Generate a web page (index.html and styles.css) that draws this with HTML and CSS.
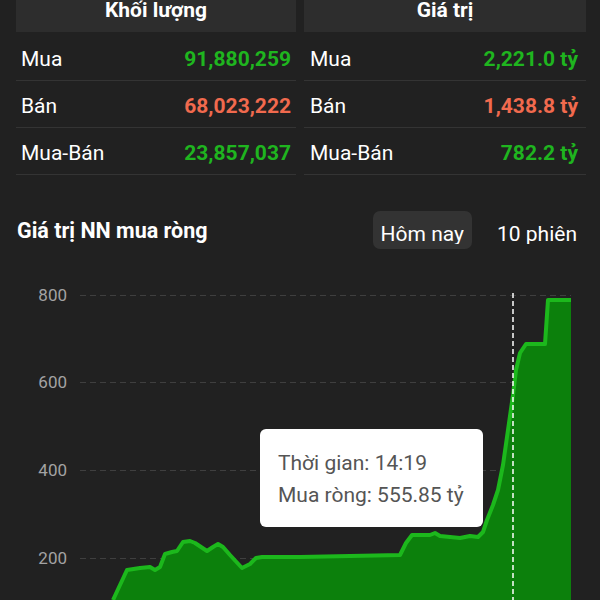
FILE: index.html
```html
<!DOCTYPE html>
<html lang="vi">
<head>
    <meta charset="UTF-8">
    <meta name="viewport" content="width=device-width, initial-scale=1.0">
    <title>Giao dịch nhà đầu tư nước ngoài</title>
    <link rel="stylesheet" href="styles.css">
</head>
<body>
    <div class="stats">
        <div class="panel">
            <div class="panel-head">Khối lượng</div>
            <div class="row first"><span>Mua</span><span class="num up">91,880,259</span></div>
            <div class="row"><span>Bán</span><span class="num down">68,023,222</span></div>
            <div class="row"><span>Mua-Bán</span><span class="num up">23,857,037</span></div>
        </div>
        <div class="panel right">
            <div class="panel-head">Giá trị</div>
            <div class="row first"><span>Mua</span><span class="num up">2,221.0 tỷ</span></div>
            <div class="row"><span>Bán</span><span class="num down">1,438.8 tỷ</span></div>
            <div class="row"><span>Mua-Bán</span><span class="num up">782.2 tỷ</span></div>
        </div>
    </div>

    <div class="chart-head">
        <h3 class="chart-title">Giá trị NN mua ròng</h3>
        <div class="tabs">
            <div class="tab active"><span class="tab-label">Hôm nay</span></div>
            <div class="tab"><span class="tab-label">10 phiên</span></div>
        </div>
    </div>

    <div class="chart">
        <svg class="chart-svg" width="600" height="345" viewBox="0 255 600 345" xmlns="http://www.w3.org/2000/svg">
            <g class="axis">
                <text x="67" y="301" text-anchor="end">800</text>
                <text x="67" y="388" text-anchor="end">600</text>
                <text x="67" y="476" text-anchor="end">400</text>
                <text x="67" y="564" text-anchor="end">200</text>
            </g>
            <g stroke="#3f3f3f" stroke-width="1" stroke-dasharray="6 4">
                <line x1="80" y1="295.5" x2="571" y2="295.5"/>
                <line x1="80" y1="382.5" x2="571" y2="382.5"/>
                <line x1="80" y1="470.5" x2="571" y2="470.5"/>
                <line x1="80" y1="558.5" x2="571" y2="558.5"/>
            </g>
            <!-- area + line, page coords -->
            <path fill="#0c800c" d="M113,600 L120,585 L127,570 L140,568 L150,567 L155,570 L160,567 L165,554 L172,552 L177,551 L183,542 L190,541 L195,543 L207,551 L213,547 L218,544 L223,547 L230,555 L242,568 L250,564 L256,558 L262,557 L300,557 L400,555 L406,543 L412,535 L430,535 L435,533 L440,536 L450,537 L460,538 L470,536 L478,537 L483,532 L487,520 L493,505 L498,490 L503,465 L508,430 L513,395 L516,370 L520,353 L526,344 L545,344 L548,300 L571,300 L571,600 Z"/>
            <path fill="none" stroke="#1cb81c" stroke-width="4" stroke-linejoin="round" d="M113,600 L120,585 L127,570 L140,568 L150,567 L155,570 L160,567 L165,554 L172,552 L177,551 L183,542 L190,541 L195,543 L207,551 L213,547 L218,544 L223,547 L230,555 L242,568 L250,564 L256,558 L262,557 L300,557 L400,555 L406,543 L412,535 L430,535 L435,533 L440,536 L450,537 L460,538 L470,536 L478,537 L483,532 L487,520 L493,505 L498,490 L503,465 L508,430 L513,395 L516,370 L520,353 L526,344 L545,344 L548,300 L571,300"/>
            <line x1="513" y1="293" x2="513" y2="600" stroke="#ffffff" stroke-width="1.5" stroke-dasharray="5 3"/>
        </svg>
        <div class="tooltip">
            <div>Thời gian: 14:19</div>
            <div>Mua ròng: 555.85 tỷ</div>
        </div>
    </div>
</body>
</html>
```

FILE: styles.css
```css
body {
    margin: 0;
    background: #212121;
    color: #ffffff;
    font-family: Roboto, "Noto Sans", Arial, sans-serif;
    overflow: hidden;
}
.stats {
    display: grid;
    grid-template-columns: 280px 282px;
    gap: 8px;
    padding-left: 16px;
}
.panel-head {
    background: #2d2d2d;
    height: 32px;
    font-size: 21px;
    font-weight: bold;
    line-height: 20px;
    text-align: center;
}
.row {
    display: flex;
    justify-content: space-between;
    box-sizing: border-box;
    height: 47px;
    padding: 13px 5px 0 5px;
    border-bottom: 1px solid #343434;
    font-size: 21px;
    line-height: 25px;
}
.row.first {
    margin-top: 2px;
}
.panel.right .row {
    padding: 13px 8px 0 6px;
}
.num {
    font-weight: bold;
}
.up {
    color: #1fb51f;
}
.down {
    color: #f16a4e;
}
.chart-head {
    display: flex;
    justify-content: space-between;
    align-items: center;
    padding: 36px 15px 0 17px;
    margin-bottom: 6px;
}
.chart-title {
    margin: 0;
    font-size: 21.5px;
    font-weight: bold;
}
.tabs {
    display: flex;
    gap: 17px;
}
.tab {
    box-sizing: border-box;
    height: 38px;
    padding: 11px 8px 0;
    border-radius: 7px;
    font-size: 21px;
}
.tab.active {
    background: #333333;
}
.tab-label {
    display: block;
    height: 22px;
    line-height: 25px;
    overflow: hidden;
}
.chart {
    position: relative;
}
.chart-svg {
    display: block;
}
.axis text {
    fill: #a3a3a3;
    font-size: 17px;
    font-family: Roboto, Arial, sans-serif;
}
.tooltip {
    position: absolute;
    left: 260px;
    top: 174px;
    width: 223px;
    box-sizing: border-box;
    padding: 18px 0 16px 18px;
    background: #ffffff;
    border-radius: 6px;
    color: #555555;
    font-size: 21px;
    line-height: 32px;
}
```
